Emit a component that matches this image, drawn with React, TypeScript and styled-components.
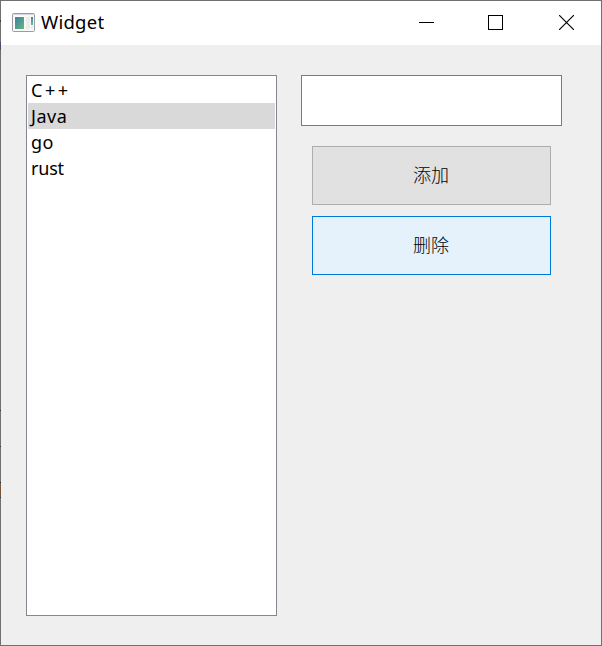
import React from "react";
import styled, { createGlobalStyle } from "styled-components";

const GlobalStyle = createGlobalStyle`
  *, *::before, *::after { box-sizing: border-box; }
  html, body { margin: 0; padding: 0; overflow: hidden; }
`;

const Window = styled.main`
  position: relative;
  display: flex;
  flex-direction: column;
  width: 602px;
  height: 646px;
  border: 1px solid #707070;
  background: #efefef;
  color: #000;
  font-family: "Noto Sans", "Noto Sans CJK SC", sans-serif;
  font-size: 18px;

  /* Desktop colours showing through the translucent left edge. */
  &::before {
    content: "";
    position: absolute;
    top: 0;
    left: -1px;
    width: 1px;
    height: 500px;
    background: linear-gradient(
      transparent 19px, #3c3c40 19px 21px, transparent 21px 41px,
      #4b4b66 41px 49px, transparent 49px 409px,
      #333 409px 410px, transparent 410px 445px,
      #333 445px 446px, transparent 446px 481px,
      #2b2622 481px 482px, #76573e 482px 496px, #33302e 496px 497px, transparent 497px
    );
  }
`;

const TitleBar = styled.header`
  display: flex;
  flex: none;
  align-items: center;
  height: 44px;
  padding-left: 11px;
  background: #fff;
`;

const AppIcon = styled.svg`
  display: block;
  flex: none;
  width: 24px;
  height: 20px;
  margin: 0 5px 2px 0;
`;

const Title = styled.h1`
  flex: 1;
  margin: 0;
  padding-bottom: 2px;
  font-size: 18.5px;
  font-weight: 400;
  line-height: 26px;
  letter-spacing: 0.25px;
`;

const Controls = styled.div`
  display: flex;
  height: 44px;
`;

const ControlButton = styled.button`
  display: flex;
  align-items: center;
  justify-content: center;
  width: 70px;
  height: 44px;
  padding: 0 0 1px;
  border: 0;
  background: transparent;

  svg {
    display: block;
    width: 15px;
    height: 15px;
  }
`;

const MaximizeButton = styled(ControlButton)`
  padding-right: 2px;
`;

const Body = styled.div`
  display: flex;
  flex: 1;
  align-items: flex-start;
  gap: 24px;
  padding: 30px 0 0 25px;
`;

const LanguageList = styled.ul`
  width: 251px;
  height: 541px;
  margin: 0;
  padding: 1px;
  border: 1px solid #828790;
  background: #fff;
  list-style: none;
`;

const LanguageItem = styled.li<{ $selected?: boolean; $tracking: number }>`
  height: 26px;
  padding-left: 3px;
  background: ${(p) => (p.$selected ? "#d9d9d9" : "transparent")};
  line-height: 26px;
  letter-spacing: ${(p) => p.$tracking}px;
`;

const Form = styled.div`
  display: flex;
  flex-direction: column;
  width: 261px;
`;

const TextField = styled.input`
  width: 261px;
  height: 51px;
  padding: 0 6px;
  border: 1px solid #7a7a7a;
  border-radius: 0;
  outline: 0;
  background: #fff;
  font: inherit;
`;

const Actions = styled.div`
  display: flex;
  flex-direction: column;
  gap: 11px;
  padding: 20px 11px 0;
`;

const ActionButton = styled.button<{ $hovered?: boolean }>`
  height: 59px;
  padding: 0 1px 4px 0;
  border: 1px solid ${(p) => (p.$hovered ? "#0078d7" : "#adadad")};
  background: ${(p) => (p.$hovered ? "#e5f1fb" : "#e1e1e1")};
  color: #000;
  font-family: "Noto Sans CJK SC", sans-serif;
  font-size: 18px;
  font-weight: 300;
  line-height: 26px;
`;

const languages = [
  { name: "C++", tracking: 2.5 },
  { name: "Java", tracking: 0.5 },
  { name: "go", tracking: 0.5 },
  { name: "rust", tracking: -0.2 },
];

export default function App() {
  return (
    <>
      <GlobalStyle />
      <Window>
        <TitleBar>
          <AppIcon viewBox="0 0 24 20">
            <defs>
              <linearGradient id="pane" x1="0" y1="0" x2="1" y2="1">
                <stop offset="0" stopColor="#3f7fa3" />
                <stop offset="1" stopColor="#63b97c" />
              </linearGradient>
              <linearGradient id="strip" x1="0" y1="0" x2="0" y2="1">
                <stop offset="0" stopColor="#4681a4" />
                <stop offset="1" stopColor="#72b98f" />
              </linearGradient>
            </defs>
            <rect x="0.5" y="1.5" width="22" height="18" rx="1" fill="#f8f8f8" stroke="#989ca4" />
            <path d="M1 2.5H22" stroke="#d3d6dc" />
            <rect x="2" y="4" width="10" height="14" fill="#fff" />
            <rect x="3" y="5" width="9" height="12" fill="url(#pane)" />
            <rect x="14" y="5" width="4" height="12" fill="#ececec" />
            <rect x="19" y="5" width="2" height="8" fill="url(#strip)" />
            <rect x="19" y="14" width="2" height="3" fill="#ececec" />
          </AppIcon>
          <Title>Widget</Title>
          <Controls>
            <ControlButton aria-label="Minimize">
              <svg viewBox="0 0 15 15"><path d="M0 7.5H15" stroke="#000" /></svg>
            </ControlButton>
            <MaximizeButton aria-label="Maximize">
              <svg viewBox="0 0 15 15"><rect x="0.5" y="0.5" width="14" height="14" fill="none" stroke="#000" /></svg>
            </MaximizeButton>
            <ControlButton aria-label="Close">
              <svg viewBox="0 0 15 15"><path d="M0 0L15 15M15 0L0 15" stroke="#000" strokeWidth="1.15" /></svg>
            </ControlButton>
          </Controls>
        </TitleBar>
        <Body>
          <LanguageList>
            {languages.map(({ name, tracking }) => (
              <LanguageItem key={name} $selected={name === "Java"} $tracking={tracking}>{name}</LanguageItem>
            ))}
          </LanguageList>
          <Form>
            <TextField aria-label="Language" />
            <Actions>
              <ActionButton>添加</ActionButton>
              <ActionButton $hovered>删除</ActionButton>
            </Actions>
          </Form>
        </Body>
      </Window>
    </>
  );
}
